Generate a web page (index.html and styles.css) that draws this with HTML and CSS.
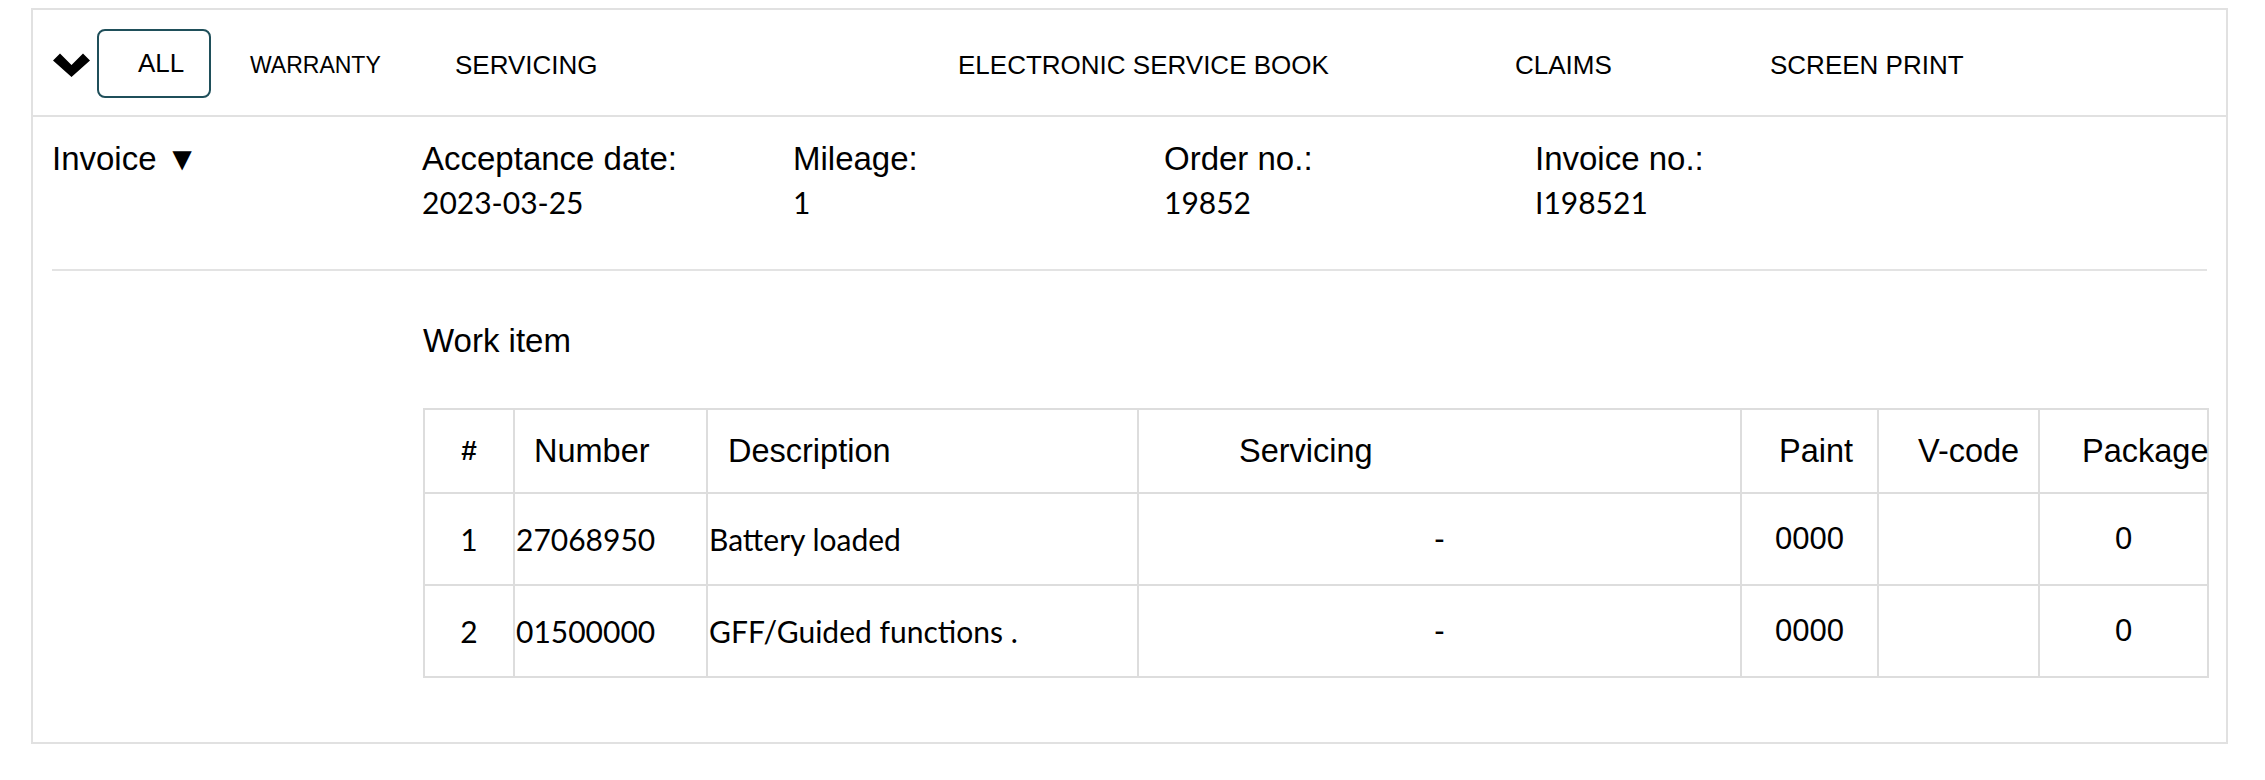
FILE: index.html
```html
<!DOCTYPE html>
<html lang="en">
<head>
<meta charset="utf-8">
<title>Invoice</title>
<link rel="stylesheet" href="styles.css">
</head>
<body>
<div class="panel">
  <nav class="tabs">
    <span class="chev"><svg width="37" height="24" viewBox="0 0 37 24"><path d="M0 7.5 L7 0.5 L18.5 12 L30 0.5 L37 7.5 L18.5 24 Z" fill="#000"/></svg></span>
    <button class="tab-all" type="button">ALL</button>
    <span class="tab tab-warranty">WARRANTY</span>
    <span class="tab tab-servicing">SERVICING</span>
    <span class="tab tab-esb">ELECTRONIC SERVICE BOOK</span>
    <span class="tab tab-claims">CLAIMS</span>
    <span class="tab tab-print">SCREEN PRINT</span>
  </nav>
  <section class="content">
    <div class="invoice-row">
      <div class="invoice-toggle">Invoice ▼</div>
      <div class="facts">
        <div class="fact"><div class="fact-label">Acceptance date:</div><div class="fact-value">2023-03-25</div></div>
        <div class="fact"><div class="fact-label">Mileage:</div><div class="fact-value">1</div></div>
        <div class="fact"><div class="fact-label">Order no.:</div><div class="fact-value">19852</div></div>
        <div class="fact"><div class="fact-label">Invoice no.:</div><div class="fact-value">I198521</div></div>
      </div>
    </div>
    <hr class="divider">
    <h2 class="work-title">Work item</h2>
    <table class="items">
      <colgroup>
        <col class="c-idx"><col class="c-num"><col class="c-desc"><col class="c-serv"><col class="c-paint"><col class="c-vcode"><col class="c-pack">
      </colgroup>
      <thead>
        <tr>
          <th class="h-idx">#</th>
          <th class="h-num">Number</th>
          <th class="h-desc">Description</th>
          <th class="h-serv">Servicing</th>
          <th class="h-paint">Paint</th>
          <th class="h-vcode">V-code</th>
          <th class="h-pack">Package</th>
        </tr>
      </thead>
      <tbody>
        <tr>
          <td class="d-idx">1</td>
          <td class="d-num">27068950</td>
          <td class="d-desc">Battery loaded</td>
          <td class="d-center">-</td>
          <td class="d-center">0000</td>
          <td class="d-center"></td>
          <td class="d-center">0</td>
        </tr>
        <tr>
          <td class="d-idx">2</td>
          <td class="d-num">01500000</td>
          <td class="d-desc">GFF/Guided functions .</td>
          <td class="d-center">-</td>
          <td class="d-center">0000</td>
          <td class="d-center"></td>
          <td class="d-center">0</td>
        </tr>
      </tbody>
    </table>
  </section>
</div>
</body>
</html>
```
FILE: styles.css
```css
* { box-sizing: border-box; }

body {
  margin: 0;
  background: #fff;
  color: #000;
  font-family: "Liberation Sans", Arial, sans-serif;
}

.panel {
  margin: 8px 37px 0 31px;
  border: 2px solid #e1e1e1;
}

/* ---------- tab bar ---------- */
.tabs {
  display: flex;
  align-items: center;
  height: 107px;
  padding-top: 1px;
  border-bottom: 2px solid #e1e1e1;
}

.chev {
  flex: none;
  display: flex;
  margin-left: 20px;
  padding-top: 3px;
}

.tab-all {
  flex: none;
  margin-left: 7px;
  width: 114px;
  height: 69px;
  padding: 0 0 0 39px;
  border: 2px solid #1f4f5a;
  border-radius: 8px;
  background: #fff;
  color: #000;
  font-family: "Liberation Sans", Arial, sans-serif;
  font-size: 26px;
  text-align: left;
}

.tab {
  flex: none;
  font-size: 26px;
  white-space: nowrap;
  padding-top: 5px;
}

.tab-warranty { margin-left: 39px; width: 205px; font-size: 23px; }
.tab-servicing { width: 503px; }
.tab-esb { width: 557px; }
.tab-claims { width: 255px; }

/* ---------- content ---------- */
.content {
  padding: 23px 19px 64px 19px;
}

.invoice-row {
  display: flex;
}

.invoice-toggle {
  flex: none;
  width: 370px;
  font-size: 33px;
  line-height: 38px;
}

.facts {
  display: grid;
  grid-template-columns: repeat(4, 371px);
}

.fact-label {
  font-size: 33px;
  line-height: 38px;
}

.fact-value {
  margin-top: 6px;
  font-family: Lato, "Liberation Sans", sans-serif;
  font-size: 30px;
  line-height: 36px;
}

.divider {
  margin: 49px 0 0 0;
  height: 2px;
  border: none;
  background: #e3e3e3;
}

.work-title {
  margin: 51px 0 0 371px;
  font-size: 33px;
  font-weight: normal;
  line-height: 38px;
}

/* ---------- table ---------- */
.items {
  margin: 48px 0 0 371px;
  width: 1786px;
  table-layout: fixed;
  border-collapse: collapse;
}

.c-idx { width: 90px; }
.c-num { width: 193px; }
.c-desc { width: 431px; }
.c-serv { width: 603px; }
.c-paint { width: 137px; }
.c-vcode { width: 161px; }
.c-pack { width: 169px; }

.items th,
.items td {
  border: 2px solid #dddddd;
  padding: 0;
  white-space: nowrap;
  vertical-align: middle;
}

.items th {
  height: 84px;
  font-size: 32.5px;
  font-weight: normal;
  text-align: left;
}

.items td {
  height: 92px;
  font-size: 31px;
}

.items th.h-idx {
  text-align: center;
  font-weight: bold;
  font-size: 28px;
}

.h-num { padding-left: 19px !important; }
.h-desc { padding-left: 20px !important; }
.h-serv { padding-left: 100px !important; }
.h-paint { padding-left: 37px !important; }
.h-vcode { padding-left: 39px !important; }
.h-pack { padding-left: 42px !important; }

.d-idx,
.d-num,
.d-desc {
  font-family: Lato, "Liberation Sans", sans-serif;
  font-size: 30px !important;
}

.d-idx { text-align: center; }
.d-num,
.d-desc { text-align: left; padding-left: 1px !important; }
.d-center { text-align: center; }
```
